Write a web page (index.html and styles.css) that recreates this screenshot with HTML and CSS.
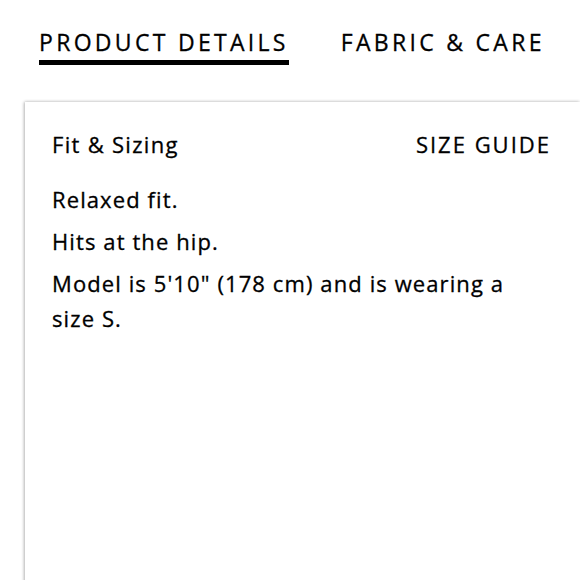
FILE: index.html
```html
<!DOCTYPE html>
<html>
<head>
<meta charset="utf-8">
<link rel="stylesheet" href="styles.css">
</head>
<body>
<div class="page">
  <nav class="tabs">
    <div class="tab active">PRODUCT DETAILS</div>
    <div class="tab">FABRIC &amp; CARE</div>
  </nav>
  <section class="card">
    <div class="card-head">
      <div class="title">Fit &amp; Sizing</div>
      <div class="guide">SIZE GUIDE</div>
    </div>
    <p class="line">Relaxed fit.</p>
    <p class="line">Hits at the hip.</p>
    <p class="line">Model is 5'10" (178 cm) and is wearing a size S.</p>
  </section>
</div>
</body>
</html>
```
FILE: styles.css
```css
html, body {
  margin: 0;
  padding: 0;
  background: #fff;
  overflow: hidden;
}
.page {
  font-family: "Open Sans", Lato, sans-serif;
  color: #000;
  width: 580px;
  height: 580px;
  overflow: hidden;
}
.tabs {
  display: flex;
  gap: 52px;
  padding: 27px 0 0 39px;
}
.tab {
  font-size: 23px;
  letter-spacing: 3.3px;
  line-height: 30px;
  padding-bottom: 3px;
  border-bottom: 5px solid transparent;
  -webkit-text-stroke: 0.3px #000;
}
.tab.active {
  border-bottom-color: #000;
}
.card {
  margin: 37px 0 0 25px;
  height: 500px;
  padding: 27px 29px 0 27px;
  background: #fff;
  box-shadow: -1px 0 3px rgba(0,0,0,0.28), 0 -1px 3px rgba(0,0,0,0.06);
}
.card-head {
  display: flex;
  justify-content: space-between;
  align-items: baseline;
  margin-bottom: 23px;
}
.title {
  font-size: 22px;
  letter-spacing: 1.3px;
  line-height: 30px;
}
.guide {
  font-size: 22px;
  letter-spacing: 2px;
  line-height: 30px;
}
.line {
  margin: 0 0 7px 0;
  font-size: 22px;
  letter-spacing: 1.1px;
  line-height: 35px;
  max-width: 475px;
}
.title, .guide, .line {
  -webkit-text-stroke: 0.3px #000;
}
```
